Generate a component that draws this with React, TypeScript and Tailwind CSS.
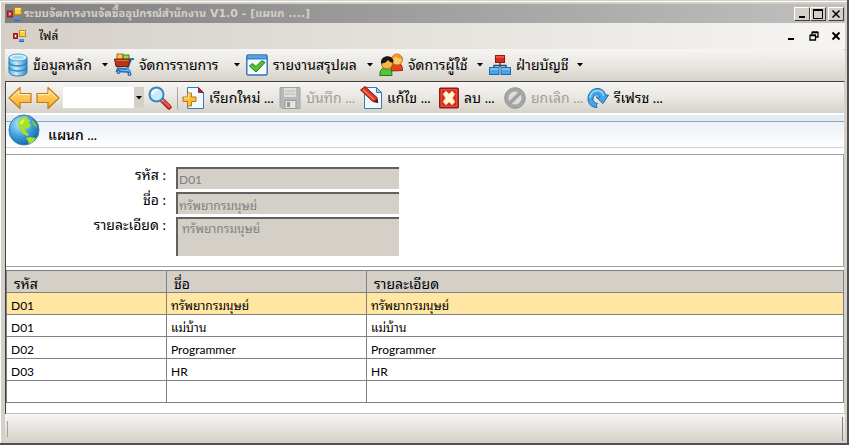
import type { ReactNode } from "react";

const FormsIcon = ({ className }: { className?: string }) => (
  <svg className={className} viewBox="0 0 14 14" aria-hidden="true">
    <rect x="0.5" y="4.5" width="4" height="5" fill="#d8403a" stroke="#8e1a1a" />
    <rect x="2" y="6" width="1" height="2" fill="#fff" />
    <rect x="6.5" y="1.5" width="6" height="6" fill="#fbd23c" stroke="#c08a14" />
    <path d="M7 2.5h5" stroke="#fff0a0" />
    <rect x="6" y="10" width="5" height="3" fill="#4a93ee" />
    <path d="M6 12.5h5" stroke="#2a5ec0" />
  </svg>
);

const DatabaseIcon = () => (
  <svg className="w-5 h-6" viewBox="0 0 20 24" aria-hidden="true">
    <defs>
      <linearGradient id="db" x1="0" x2="1">
        <stop offset="0" stopColor="#58aede" />
        <stop offset="0.4" stopColor="#c9ecfb" />
        <stop offset="1" stopColor="#3488c6" />
      </linearGradient>
    </defs>
    <path d="M1 4v15c0 2.400 4 4 9 4s9-1.600 9-4V4z" fill="url(#db)" stroke="#2b7fb8" />
    <path d="M1 9c0 2.400 4 4 9 4s9-1.600 9-4M1 14c0 2.400 4 4 9 4s9-1.600 9-4" fill="none" stroke="#2a83bf" strokeWidth="1.300" />
    <ellipse cx="10" cy="4.500" rx="9" ry="3.500" fill="#d9f3fd" stroke="#4a9dcc" />
    <ellipse cx="10" cy="4.500" rx="6" ry="1.800" fill="#a5dcf5" />
  </svg>
);

const CartIcon = () => (
  <svg className="w-5 h-6" viewBox="0 0 20 24" aria-hidden="true">
    <rect x="3" y="1" width="6" height="6" fill="#f6c95e" stroke="#b26c14" />
    <rect x="9" y="2" width="6" height="5" fill="#8ddb3c" stroke="#3d8a18" />
    <path d="M20 6h-3L13 16l-9-.5L3 18l12 1" fill="none" stroke="#2379c2" strokeWidth="2.200" />
    <path d="M.5 6H16l-1.500 7.500H2z" fill="#b5361a" stroke="#7c1e0d" />
    <path d="M2 7.500h12.500" stroke="#dc7049" />
    <path d="M13 15l3.500 4" stroke="#4ba5e4" strokeWidth="2" />
    <circle cx="4.500" cy="19" r="2" fill="#1c65ad" />
    <circle cx="15.500" cy="21" r="2" fill="#1c65ad" />
    <circle cx="4.500" cy="19" r="0.700" fill="#fff" />
    <circle cx="15.500" cy="21" r="0.700" fill="#fff" />
  </svg>
);

const CheckIcon = () => (
  <svg className="w-[22px] h-6" viewBox="0 0 22 24" aria-hidden="true">
    <rect x="0.800" y="2" width="20.400" height="20" rx="1.500" fill="#f6faff" stroke="#2b72bd" strokeWidth="1.400" />
    <path d="M1 3h20v3.500H1z" fill="#3489d4" />
    <path d="M2 4h18" stroke="#7bbcf0" />
    <path d="M3.500 13l3-2.500 3.500 3L16 7.500l3 2L10 19z" fill="#55c234" stroke="#237a15" />
  </svg>
);

const UsersIcon = () => (
  <svg className="w-6 h-6" viewBox="0 0 24 24" aria-hidden="true">
    <path d="M12 18c0-6 3-8 6-8 4 0 5.500 3 5.500 7.500z" fill="#e3431f" stroke="#9c2711" />
    <circle cx="18" cy="6.500" r="5.500" fill="#f9c765" stroke="#b96d13" />
    <path d="M12.500 6c0-6 10-7 11 0-3 0-5-1-7-2.500C15.500 5 14 6 12.500 6z" fill="#f2932a" />
    <path d="M.8 22.500C.8 17 3 14.500 7 14.500s6 2.500 6 8z" fill="#53c43a" stroke="#247c17" />
    <circle cx="8" cy="10.500" r="5.500" fill="#f8b744" stroke="#a96816" />
    <path d="M2 10.500C1 2 13 1 14.500 7.500L14 10c-2-.5-4-1.500-5-3-1.500 2.500-4 3.500-7 3.500z" fill="#1c1712" />
  </svg>
);

const OrgChartIcon = () => (
  <svg className="w-[22px] h-6" viewBox="0 0 22 24" aria-hidden="true">
    <path d="M11 9v5M5 15v-2.500h12V15" fill="none" stroke="#24466d" strokeWidth="1.400" />
    <rect x="6.500" y="2.500" width="9" height="7" fill="#d82b1b" stroke="#8f170d" />
    <path d="M7 4h8" stroke="#f58270" />
    <rect x="0.500" y="14.500" width="9.500" height="7" fill="#45a5e6" stroke="#1b69ae" />
    <rect x="12" y="14.500" width="9.500" height="7" fill="#45a5e6" stroke="#1b69ae" />
    <path d="M1 16h8.500M12.500 16H21" stroke="#a9dcfa" />
  </svg>
);

const ArrowIcon = ({ className }: { className?: string }) => (
  <svg className={className} viewBox="0 0 24 24" aria-hidden="true">
    <defs>
      <linearGradient id="arrow" x1="0" y1="0" x2="0" y2="1">
        <stop offset="0" stopColor="#ffdf83" />
        <stop offset="1" stopColor="#fbab1f" />
      </linearGradient>
    </defs>
    <path d="M1 12L12 1.500V7.500h11v9H12v6z" fill="url(#arrow)" stroke="#c07a1e" strokeWidth="1.200" strokeLinejoin="round" />
    <path d="M3 12l8-7.500v4h11" fill="none" stroke="#fff0bb" />
  </svg>
);

const SearchIcon = () => (
  <svg className="w-6 h-6" viewBox="0 0 24 24" aria-hidden="true">
    <path d="M14.500 14.500l6.500 6.500" stroke="#a31a12" strokeWidth="5" strokeLinecap="round" />
    <path d="M15 14.500l6 6" stroke="#ec5145" strokeWidth="3" strokeLinecap="round" />
    <path d="M12.500 12.500l3 3" stroke="#8c9aa5" strokeWidth="3" />
    <circle cx="8.500" cy="8.500" r="7" fill="#c8ebfc" stroke="#3a86bd" strokeWidth="2" />
    <path d="M4.500 8a4.500 4.500 0 0 1 5-4" fill="none" stroke="#fff" strokeWidth="2" />
  </svg>
);

const NewIcon = () => (
  <svg className="w-[22px] h-6" viewBox="0 0 22 24" aria-hidden="true">
    <path d="M5.500 1.500h11l5 5v16h-16z" fill="#f1f8fe" stroke="#347bb9" />
    <path d="M16.500 1.500v5h5z" fill="#b5203a" stroke="#8f2440" />
    <path d="M5.500 7h4v4H14v4.500H9.500V20h-4v-4.500H1V11h4.500z" fill="#fbbd3a" stroke="#b8741b" />
    <path d="M6.500 12V8h2M2 12h4.500" fill="none" stroke="#ffe9a4" />
  </svg>
);

const SaveIcon = () => (
  <svg className="w-[22px] h-6" viewBox="0 0 22 24" aria-hidden="true">
    <path d="M1 1.500h20v21H3l-2-2z" fill="#b8b8b8" stroke="#a2a2a2" />
    <rect x="5" y="2" width="12" height="9" fill="#dedede" />
    <path d="M6 5h10M6 8h10" stroke="#b8b8b8" />
    <rect x="6" y="14.500" width="11" height="8" fill="#e4e4e4" stroke="#999" />
    <rect x="8" y="16" width="3" height="5" fill="#999" />
  </svg>
);

const EditIcon = () => (
  <svg className="w-[22px] h-6" viewBox="0 0 22 24" aria-hidden="true">
    <path d="M4.500 1.500h12l5 5v16h-17z" fill="#f1f8fe" stroke="#347bb9" />
    <path d="M16.500 1.500v5h5z" fill="#a7cbe8" stroke="#347bb9" />
    <path d="M.5 4L5 .5 17 11.500l.8 5-5-1z" fill="#d93625" stroke="#8d1b11" />
    <path d="M3 3.500l11 10" stroke="#f48673" strokeWidth="1.200" />
    <path d="M14 15.800l3.800.7-.6-3.500z" fill="#42200f" />
  </svg>
);

const DeleteIcon = () => (
  <svg className="w-5 h-6" viewBox="0 0 20 24" aria-hidden="true">
    <rect x="0.700" y="2.200" width="18.600" height="19.600" rx="1" fill="#d92b20" stroke="#971811" strokeWidth="1.400" />
    <rect x="2.200" y="3.700" width="15.600" height="16.600" fill="none" stroke="#e2574b" />
    <path d="M4 8l3-3 3 3 3-3 3 3-2.500 4 2.500 4-3 3-3-3-3 3-3-3 2.500-4z" fill="#fff6d2" stroke="#f3c476" strokeWidth="0.600" />
  </svg>
);

const CancelIcon = () => (
  <svg className="w-[22px] h-6" viewBox="0 0 22 24" aria-hidden="true">
    <circle cx="11" cy="12" r="10.300" fill="#a6a6a6" stroke="#939393" />
    <circle cx="11" cy="12" r="6.500" fill="#dcdcdc" />
    <path d="M6 17L16 7" stroke="#a0a0a0" strokeWidth="3.500" />
  </svg>
);

const RefreshIcon = () => (
  <svg className="w-[22px] h-6" viewBox="0 0 22 24" aria-hidden="true">
    <path
      d="M10 21.500C4 21.500.8 17 1 12.500 1.300 6.500 5.500 2.500 10.500 2.500c4.300 0 7 2.500 8 6.500h3l-5.500 8.500L9 11h4c-.5-1.500-1.500-2.200-3-2.200-2.500 0-4 1.700-4 4.200s1.500 4 4.500 4.500c-1.300.8-1.200 2.500-.5 4z"
      fill="#42a6e8"
      stroke="#1d6cae"
      strokeLinejoin="round"
    />
    <path d="M3 12c.3-4.500 3.500-7.500 7.300-7.500 3.200 0 5.700 2 6.400 5.500" fill="none" stroke="#a3dafa" strokeWidth="1.300" />
  </svg>
);

const GlobeIcon = () => (
  <svg className="w-8 h-8" viewBox="0 0 32 32" aria-hidden="true">
    <defs>
      <radialGradient id="globe" cx="0.350" cy="0.300" r="0.750">
        <stop offset="0" stopColor="#b4e6fb" />
        <stop offset="0.550" stopColor="#3da0dc" />
        <stop offset="1" stopColor="#1763a3" />
      </radialGradient>
    </defs>
    <circle cx="16" cy="16" r="15" fill="url(#globe)" stroke="#2e7db5" />
    <path d="M10 7c2-3.500 6-5 10-4.500l-1 2 3 1.500-1 3 2 2-2 3-4 1 1 3 3 2-1 2-5-2-3-4-2-5z" fill="#a4e02c" />
    <path d="M24 6l4 4 1 4-3-2-2-3z" fill="#7cc832" />
    <path d="M18 24l4-1 6 1-3 4-4 2-1-3z" fill="#a4e02c" />
    <path d="M11 9l4-4 2 1-3 5z" fill="#d4f466" />
  </svg>
);

const DropArrow = () => (
  <svg className="w-1.5 h-1 shrink-0" viewBox="0 0 6 4" aria-hidden="true">
    <path d="M0 0h6L3 3.500z" fill="#000" />
  </svg>
);

const WindowButton = ({ label, children }: { label: string; children: ReactNode }) => (
  <button
    type="button"
    aria-label={label}
    className="w-4 h-[14px] flex items-center justify-center bg-[#d4d0c8] border border-t-white border-l-white border-r-[#404040] border-b-[#404040]"
  >
    {children}
  </button>
);

const menus = [
  { label: "ข้อมูลหลัก", icon: <DatabaseIcon />, width: "w-[106px]" },
  { label: "จัดการรายการ", icon: <CartIcon />, width: "w-[132px]" },
  { label: "รายงานสรุปผล", icon: <CheckIcon />, width: "w-[133px]" },
  { label: "จัดการผู้ใช้", icon: <UsersIcon />, width: "w-[110px]" },
  { label: "ฝ่ายบัญชี", icon: <OrgChartIcon />, width: "w-[100px]" },
];

const actions = [
  { label: "เรียกใหม่ ...", icon: <NewIcon />, width: "w-[97px]", disabled: false },
  { label: "บันทึก ...", icon: <SaveIcon />, width: "w-[81px]", disabled: true },
  { label: "แก้ไข ...", icon: <EditIcon />, width: "w-[79px]", disabled: false },
  { label: "ลบ ...", icon: <DeleteIcon />, width: "w-[65px]", disabled: false },
  { label: "ยกเลิก ...", icon: <CancelIcon />, width: "w-[83px]", disabled: true },
  { label: "รีเฟรช ...", icon: <RefreshIcon />, width: "w-[80px]", disabled: false },
];

const rows = [
  ["D01", "ทรัพยากรมนุษย์", "ทรัพยากรมนุษย์"],
  ["D01", "แม่บ้าน", "แม่บ้าน"],
  ["D02", "Programmer", "Programmer"],
  ["D03", "HR", "HR"],
  ["", "", ""],
];

const fieldClass =
  "w-[223px] block resize-none bg-[#d4d0c8] text-[#808080] text-xs leading-4 border-t-2 border-l-2 border-[#606060] px-px";

export default function App() {
  return (
    <div className="bg-white pr-px font-[Lato,'Noto_Sans_Thai_Looped',Loma,'Noto_Sans_Thai','Noto_Sans',sans-serif] text-sm text-black">
      <div className="bg-[#d4d0c8] border-r-2 border-b-2 border-[#505050]">
        <div className="border-t border-[#d4d0c8]">
          <div className="border-t border-l border-white pt-0.5 pl-1 pr-0.5">
            {/* Title bar */}
            <header className="h-[19px] flex items-center gap-px pl-0.5 pr-px bg-gradient-to-r from-[#808080] to-[#c0c0c0]">
              <FormsIcon className="w-4 h-4" />
              <h1 className="flex-1 text-[11px] leading-4 font-bold text-[#d4d0c8] whitespace-nowrap font-['DejaVu_Sans','Noto_Sans_Thai_Looped',Loma,'Noto_Sans_Thai',sans-serif]">
                ระบบจัดการงานจัดซื้ออุปกรณ์สำนักงาน V1.0 - [แผนก ....]
              </h1>
              <div className="flex">
                <WindowButton label="Minimize">
                  <svg className="w-2.5 h-2.5" viewBox="0 0 10 10"><path d="M2 8h6" stroke="#000" strokeWidth="2" /></svg>
                </WindowButton>
                <WindowButton label="Maximize">
                  <svg className="w-2.5 h-2.5" viewBox="0 0 10 10"><path d="M.5 1v8.500h9V1M0 1h10" fill="none" stroke="#000" /><path d="M0 1h10" stroke="#000" strokeWidth="2" /></svg>
                </WindowButton>
                <span className="w-0.5" />
                <WindowButton label="Close">
                  <svg className="w-2.5 h-2.5" viewBox="0 0 10 10"><path d="M1.500 1.500l7 7M8.500 1.500l-7 7" stroke="#000" strokeWidth="1.500" /></svg>
                </WindowButton>
              </div>
            </header>

            {/* Menu bar */}
            <nav className="h-[26px] flex items-center bg-gradient-to-r from-[#d4d0c8] to-[#f6f5f3] pl-2 pr-1">
              <FormsIcon className="w-3.5 h-3.5" />
              <button type="button" className="ml-3 flex-1 text-left text-xs">ไฟล์</button>
              <div className="flex items-center gap-3">
                <button type="button" aria-label="Minimize document">
                  <svg className="w-2.5 h-2.5" viewBox="0 0 10 10"><path d="M1 8h6" stroke="#000" strokeWidth="2" /></svg>
                </button>
                <button type="button" aria-label="Restore document">
                  <svg className="w-2.5 h-2.5" viewBox="0 0 10 10"><path d="M3 3V1.500h6V6H7M1 4.500h5.500V9H1zM1 4h6M3 1h6" fill="none" stroke="#000" strokeWidth="1.300" /></svg>
                </button>
                <button type="button" aria-label="Close document">
                  <svg className="w-2.5 h-2.5" viewBox="0 0 10 10"><path d="M1.500 1.500l7 7M8.500 1.500l-7 7" stroke="#000" strokeWidth="2" /></svg>
                </button>
              </div>
            </nav>

            {/* Main menu strip */}
            <nav className="h-8 flex items-center pl-[3px] rounded-r-sm bg-gradient-to-b from-[#f6f5f3] via-[#e9e7e2] to-[#d6d2ca]">
              {menus.map((m) => (
                <button key={m.label} type="button" className={`${m.width} flex items-center shrink-0 gap-[5px] pr-1.5 whitespace-nowrap`}>
                  {m.icon}
                  <span className="flex-1 text-left">{m.label}</span>
                  <DropArrow />
                </button>
              ))}
            </nav>

            <main className="bg-white border-l border-t border-[#404040] border-r border-r-[#d4d0c8]">
              {/* Record tools */}
              <div className="h-[31px] flex items-center pl-0.5 bg-gradient-to-b from-[#f6f5f3] via-[#e9e7e2] to-[#d6d2ca]">
                <button type="button" aria-label="Previous"><ArrowIcon className="block w-6 h-6" /></button>
                <button type="button" aria-label="Next" className="ml-1"><ArrowIcon className="block w-6 h-6 -scale-x-100" /></button>
                <div className="ml-[3px] w-[81px] h-[21px] flex bg-white">
                  <input aria-label="Find" className="min-w-0 flex-1 px-1 outline-none" />
                  <button type="button" aria-label="Show list" className="w-2.5 flex items-center justify-center bg-[#d4d0c8]"><DropArrow /></button>
                </div>
                <button type="button" aria-label="Search" className="ml-1"><SearchIcon /></button>
                <div className="ml-[5px] mr-1 w-px h-[22px] bg-[#a9a59c]" />
                {actions.map((a) => (
                  <button
                    key={a.label}
                    type="button"
                    disabled={a.disabled}
                    className={`${a.width} flex items-center shrink-0 gap-[5px] whitespace-nowrap disabled:text-[#a09d97]`}
                  >
                    {a.icon}
                    <span>{a.label}</span>
                  </button>
                ))}
              </div>

              {/* Page heading */}
              <div className="mt-0.5 pt-1.5 bg-[#e2ecf5]">
                <div className="h-[27px] flex items-center gap-2 pl-0.5 border-t border-[#a0a0a0] border-b border-b-[#d0d4d8] bg-gradient-to-b from-[#e9f1f9] to-white">
                  <div className="-mt-2.5"><GlobeIcon /></div>
                  <h2 className="font-medium">แผนก ...</h2>
                </div>
              </div>

              {/* Details form */}
              <form className="mt-1.5 h-[113px] border border-l-0 border-[#a0a0a0] pt-3 grid grid-cols-[160px_1fr] gap-x-2.5 content-start">
                <label htmlFor="code" className="h-[25px] text-right leading-4">รหัส :</label>
                <input id="code" disabled defaultValue="D01" className={`${fieldClass} h-[22px]`} />
                <label htmlFor="name" className="h-[25px] text-right leading-4">ชื่อ :</label>
                <input id="name" disabled defaultValue="ทรัพยากรมนุษย์" className={`${fieldClass} h-[22px]`} />
                <label htmlFor="detail" className="text-right leading-4">รายละเอียด :</label>
                <textarea id="detail" disabled defaultValue="ทรัพยากรมนุษย์" className={`${fieldClass} h-[39px] pl-1 pt-0.5 overflow-hidden`} />
              </form>

              {/* Departments */}
              <table className="mt-[3px] w-full table-fixed border-separate border-spacing-0 border-t border-l border-[#808080]">
                <colgroup>
                  <col className="w-[160px]" />
                  <col className="w-[200px]" />
                  <col />
                </colgroup>
                <thead>
                  <tr className="bg-[#d4d0c8] text-left">
                    {["รหัส", "ชื่อ", "รายละเอียด"].map((h) => (
                      <th key={h} className="h-[22px] p-0 pt-1 pl-[7px] font-normal leading-4 border-b border-r border-[#808080]">{h}</th>
                    ))}
                  </tr>
                </thead>
                <tbody>
                  {rows.map((row, i) => (
                    <tr key={i} className={i === 0 ? "bg-[#ffe6a2]" : "bg-white"}>
                      {row.map((cell, j) => (
                        <td key={j} className="h-[22px] p-0 pt-1 pl-1 text-xs leading-4 border-b border-r border-[#808080]">{cell}</td>
                      ))}
                    </tr>
                  ))}
                </tbody>
              </table>
              <div className="h-[11px] border-b border-[#c0c0c0]" />
            </main>

            {/* Status bar */}
            <footer className="h-[29px] flex items-center justify-between px-0.5 bg-gradient-to-b from-[#f8f7f6] to-[#d4d0c8]">
              <span className="w-px h-4 bg-[#a0a0a0]" />
              <span className="w-px h-6 bg-[#808080]" />
            </footer>
          </div>
        </div>
      </div>
    </div>
  );
}
